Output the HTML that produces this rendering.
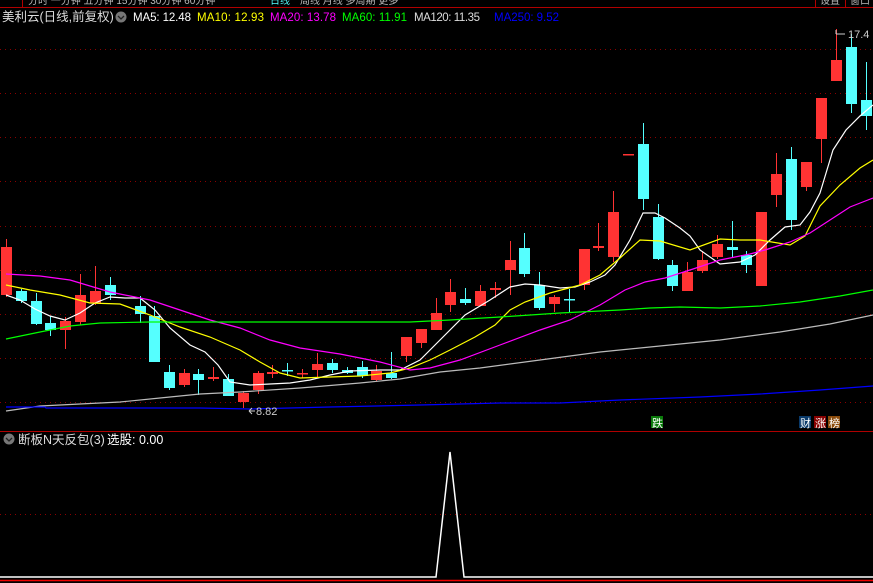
<!DOCTYPE html>
<html><head><meta charset="utf-8"><style>
html,body{margin:0;padding:0;background:#000;width:873px;height:583px;overflow:hidden}
svg{display:block}
text{font-family:"Liberation Sans","Noto Sans CJK SC",sans-serif}
</style></head><body>
<svg id="s" width="873" height="583" xmlns="http://www.w3.org/2000/svg">
<rect width="873" height="583" fill="#000"/>
<g stroke="#8b0000" stroke-width="1" stroke-dasharray="1,4">
<line x1="0" y1="49.5" x2="873" y2="49.5"/><line x1="0" y1="93.5" x2="873" y2="93.5"/>
<line x1="0" y1="137.5" x2="873" y2="137.5"/><line x1="0" y1="181.5" x2="873" y2="181.5"/>
<line x1="0" y1="226.5" x2="873" y2="226.5"/><line x1="0" y1="270.5" x2="873" y2="270.5"/>
<line x1="0" y1="314.5" x2="873" y2="314.5"/><line x1="0" y1="358.5" x2="873" y2="358.5"/>
<line x1="0" y1="402.5" x2="873" y2="402.5"/><line x1="0" y1="514.5" x2="873" y2="514.5"/>
</g>
<line x1="0" y1="7.5" x2="873" y2="7.5" stroke="#b00000"/>
<line x1="22.5" y1="0" x2="22.5" y2="7" stroke="#b00000"/>
<line x1="815.5" y1="0" x2="815.5" y2="7" stroke="#b00000"/>
<line x1="845.5" y1="0" x2="845.5" y2="7" stroke="#b00000"/>
<g fill="#bbb" font-size="10"><text x="28" y="4">分时 一分钟 五分钟 15分钟 30分钟 60分钟</text><text x="270" y="4" fill="#5ff">日线</text><text x="300" y="4">周线 月线 多周期 更多</text><text x="820" y="4">设置</text><text x="850" y="4">窗口</text></g>
<line x1="0" y1="431.5" x2="873" y2="431.5" stroke="#b00000"/>
<g font-size="12.5">
<text x="2" y="21" fill="#ddd">美利云(日线,前复权)</text>
<circle cx="121" cy="17" r="5.5" fill="#777"/><path d="M118 16l3 3 3-3" stroke="#222" fill="none" stroke-width="1.3"/>
<circle cx="9" cy="439" r="5.5" fill="#777"/><path d="M6 438l3 3 3-3" stroke="#222" fill="none" stroke-width="1.3"/>
<text x="18" y="444" fill="#ddd">断板N天反包(3)</text>
</g>
<g font-size="11.5">
<text x="133" y="21" fill="#fff" textLength="58">MA5: 12.48</text>
<text x="197" y="21" fill="#ff0" textLength="67">MA10: 12.93</text>
<text x="270" y="21" fill="#f0f" textLength="66">MA20: 13.78</text>
<text x="342" y="21" fill="#0f0" textLength="65">MA60: 11.91</text>
<text x="414" y="21" fill="#ddd" textLength="66">MA120: 11.35</text>
<text x="494" y="21" fill="#00f" textLength="65">MA250: 9.52</text>
<text x="107" y="444" fill="#fff" font-size="12.5">选股: 0.00</text>
</g>
<g id="c"></g>
<g fill="none" stroke-width="1.2" id="m"></g>
<text x="256" y="415" fill="#ccc" font-size="11">8.82</text>
<path d="M249 411h6M249 411l3-3M249 411l3 3" stroke="#ccc" fill="none"/>
<text x="848" y="38" fill="#ccc" font-size="11">17.4</text>
<path d="M836 34h9M836 30v4" stroke="#ccc" fill="none"/>
<rect x="651" y="416" width="12" height="12" fill="#0a7a0a"/><text x="652" y="427" fill="#fff" font-size="11">跌</text>
<rect x="799" y="416" width="12" height="12" fill="#0a3a6a"/><text x="800" y="427" fill="#fff" font-size="11">财</text>
<rect x="814" y="416" width="12" height="12" fill="#800"/><text x="815" y="427" fill="#fff" font-size="11">涨</text>
<rect x="828" y="416" width="12" height="12" fill="#8a4a0a"/><text x="829" y="427" fill="#fff" font-size="11">榜</text>
<polyline points="0,577 436,577 450,452 464,577 873,577" stroke="#fff" stroke-width="1.5" fill="none"/>
<line x1="0" y1="580.5" x2="873" y2="580.5" stroke="#e00" stroke-width="1.5"/>
</svg>
<script>
var C=[[6,'r',247,295,239,297],[21,'c',291,301,289,303],[36,'c',301,324,293,325],[50,'c',323,330,316,336],[65,'r',321,330,317,349],[80,'r',295,322,274,325],[95,'r',291,303,266,305],[110,'c',285,295,277,300],[140,'c',306,314,296,323],[154,'c',316,362,306,362],[169,'c',372,388,365,390],[184,'r',373,385,369,387],[198,'c',374,380,369,395],[213,'r',377,379,367,381],[228,'c',379,396,374,396],[243,'r',393,402,391,408],[258,'r',373,390,371,394],[272,'r',372,374,365,378],[287,'c',370,371,363,376],[302,'r',373,374,369,378],[317,'r',364,370,353,377],[332,'c',363,370,359,373],[347,'c',370,373,367,374],[362,'c',367,376,361,378],[376,'r',371,380,365,381],[391,'c',373,378,352,379],[406,'r',337,356,337,362],[421,'r',329,343,329,348],[436,'r',313,330,298,330],[450,'r',292,305,279,312],[465,'c',299,303,288,305],[480,'r',291,306,285,306],[495,'r',288,290,282,298],[510,'r',260,270,241,295],[524,'c',248,274,233,277],[539,'c',285,308,272,310],[554,'r',297,304,295,312],[569,'c',299,300,289,313],[584,'r',249,285,249,290],[598,'r',246,248,223,251],[613,'r',212,257,191,262],[628,'r',154,155,154,155],[643,'c',144,199,123,210],[658,'c',217,259,204,260],[672,'c',265,286,260,291],[687,'r',272,291,262,291],[702,'r',260,271,251,273],[717,'r',244,257,235,259],[732,'c',247,250,221,257],[746,'c',255,265,251,273],[761,'r',212,286,212,286],[776,'r',174,195,153,207],[791,'c',159,220,147,230],[806,'r',162,187,162,191],[821,'r',98,139,98,163],[836,'r',60,81,29,81],[851,'c',47,104,34,113],[866,'c',100,116,62,130]];
var h='';C.forEach(function(k){var col=k[1]=='r'?'#ff3333':'#55ffff';h+='<line x1="'+(k[0]+.5)+'" y1="'+k[4]+'" x2="'+(k[0]+.5)+'" y2="'+k[5]+'" stroke="'+col+'"/>';h+='<rect x="'+(k[0]-5)+'" y="'+k[2]+'" width="11" height="'+Math.max(1.5,k[3]-k[2])+'" fill="'+col+'"/>';});
document.getElementById('c').innerHTML=h;
var M=[['#fff','6,295 20,300 35,309 50,316 65,320 80,313 95,303 110,297 125,298 140,298 155,310 170,328 190,345 205,352 218,365 230,382 250,385 270,384 290,383 310,380 330,375 350,371 380,370 400,370 420,360 440,340 465,315 490,300 510,287 525,284 540,285 560,288 575,287 590,282 605,275 615,265 630,240 643,213 655,213 665,218 680,228 690,236 700,250 710,257 720,264 740,262 755,255 770,240 785,227 800,225 810,212 820,193 833,150 846,130 860,116 873,105'],['#ff0','6,285 30,290 60,295 90,303 120,304 150,315 180,327 210,337 240,350 260,362 280,373 300,378 330,377 360,376 390,373 410,368 430,360 450,350 475,337 495,325 510,310 525,302 550,293 580,285 600,275 620,258 640,240 660,241 690,250 720,239 740,240 760,240 790,245 805,236 820,206 840,185 860,168 873,160'],['#f0f','6,274 40,276 70,280 110,292 150,300 180,310 210,320 240,328 270,340 300,348 340,354 380,362 410,370 430,368 460,360 500,345 540,330 570,320 600,305 625,290 645,282 665,278 690,270 720,260 750,254 765,250 790,242 810,233 830,220 850,207 873,198'],['#0f0','6,339 40,332 70,326 100,323 150,322 200,322 260,322 310,322 360,322 410,322 450,320 500,317 560,313 620,310 650,308 680,307 720,308 760,306 800,302 840,296 873,290'],['#bbb','6,411 40,406 80,404 120,402 160,398 200,394 240,392 300,388 360,383 400,379 440,372 480,368 540,360 600,352 660,346 720,340 780,332 830,324 873,315'],['#00f','6,407 45,407 46,408 200,408 250,409 330,407 420,405 500,403 560,403 620,400 700,397 760,394 820,390 873,386']];
var g='';M.forEach(function(m){g+='<polyline points="'+m[1]+'" stroke="'+m[0]+'"/>';});
document.getElementById('m').innerHTML=g;
</script>
</body></html>
